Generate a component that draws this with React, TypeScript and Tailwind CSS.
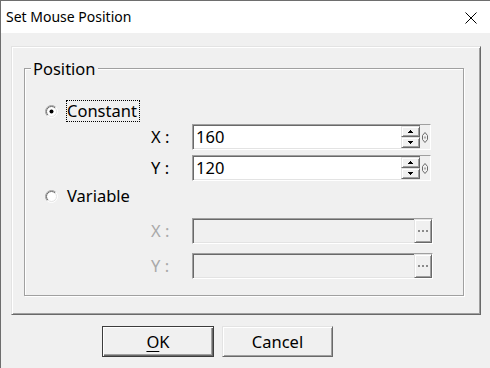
import React from "react";

const sunken =
  "border border-t-[#a0a0a0] border-l-[#a0a0a0] border-r-white border-b-white shadow-[inset_1px_1px_0_#696969,inset_-1px_-1px_0_#e3e3e3]";
const raised =
  "border border-t-[#e3e3e3] border-l-[#e3e3e3] border-r-[#696969] border-b-[#696969] shadow-[inset_1px_1px_0_#fff,inset_-1px_-1px_0_#a0a0a0]";

function Radio({ checked }: { checked: boolean }) {
  return (
    <svg width="13" height="13" viewBox="0 0 13 13" className="shrink-0">
      <circle cx="6.5" cy="6.5" r="5.5" fill="#fff" />
      <path d="M2.257 10.743 A6 6 0 0 1 10.743 2.257" stroke="#a0a0a0" fill="none" />
      <path d="M10.743 2.257 A6 6 0 0 1 2.257 10.743" stroke="#fff" fill="none" />
      <path d="M2.964 10.036 A5 5 0 0 1 10.036 2.964" stroke="#696969" fill="none" />
      <path d="M10.036 2.964 A5 5 0 0 1 2.964 10.036" stroke="#e3e3e3" fill="none" />
      {checked && <circle cx="6.5" cy="6.5" r="2" fill="#000" />}
    </svg>
  );
}

function SpinEdit({ value }: { value: string }) {
  return (
    <div className={`w-[239px] h-[26px] bg-white flex ${sunken}`}>
      <div className="flex-1 flex items-center pl-[3px] leading-[20px]">{value}</div>
      <div className="w-[19px] flex flex-col py-[1px]">
        <div className={`h-[11px] flex items-center justify-center bg-[#f0f0f0] ${raised}`}>
          <svg width="5" height="3" viewBox="0 0 5 3">
            <path d="M2 0h1v1h1v1h1v1H0V2h1V1h1z" fill="#000" />
          </svg>
        </div>
        <div className={`h-[11px] flex items-center justify-center bg-[#f0f0f0] ${raised}`}>
          <svg width="5" height="3" viewBox="0 0 5 3">
            <path d="M0 0h5v1H4v1H3v1H2V2H1V1H0z" fill="#000" />
          </svg>
        </div>
      </div>
      <div className="w-[10px] flex items-center justify-center bg-[#f0f0f0]">
        <svg width="6" height="11" viewBox="0 0 6 11">
          <path d="M3 0.5 L5.5 3.5 L5.5 7.5 L3 10.5 L0.5 7.5 L0.5 3.5 Z" stroke="#6a6a6a" fill="none" strokeWidth="1" />
          <rect x="2.5" y="4.5" width="1" height="2" fill="#6a6a6a" />
        </svg>
      </div>
    </div>
  );
}

function DisabledEdit() {
  return (
    <div className={`w-[241px] h-[26px] bg-[#f0f0f0] flex justify-end ${sunken}`}>
      <div className={`w-[18px] h-full flex items-center justify-center gap-[2px] ${raised}`}>
        <span className="w-[2px] h-[2px] bg-[#8a8a8a]" />
        <span className="w-[2px] h-[2px] bg-[#8a8a8a]" />
        <span className="w-[2px] h-[2px] bg-[#8a8a8a]" />
      </div>
    </div>
  );
}

export default function App() {
  return (
    <div className="w-[490px] h-[368px] overflow-hidden bg-[#f0f0f0] border-t border-l border-[#6e6e6e] flex flex-col font-['Noto_Sans','Open_Sans',sans-serif] text-[16.5px] text-black">
      <div className="h-[32px] shrink-0 bg-white flex items-center justify-between pl-[5px] pr-[13px]">
        <span className="text-[14px] leading-[20px]">Set Mouse Position</span>
        <svg width="12" height="12" viewBox="0 0 12 12" className="mt-[2px]">
          <path d="M0.5 0.5 L11.5 11.5 M11.5 0.5 L0.5 11.5" stroke="#000" strokeWidth="1" />
        </svg>
      </div>

      <div className="ml-[10px] mt-[13px] w-[470px] h-[269px] shrink-0 border border-t-[#e3e3e3] border-l-[#e3e3e3] border-r-[#696969] border-b-[#696969] shadow-[inset_1px_1px_0_#fff,inset_-1px_-1px_0_#a0a0a0] pl-[12px] pt-[21px]">
        <div className="relative w-[440px] h-[228px] border border-[#a0a0a0] shadow-[1px_1px_0_#fff,inset_1px_1px_0_#fff] pt-[31px] pl-[20px]">
          <span className="absolute left-[6px] top-[-11px] px-[2px] bg-[#f0f0f0] leading-[22px]">Position</span>

          <div className="flex items-center h-[22px] gap-[8px]">
            <Radio checked />
            <span className="h-[22px] border border-dotted border-black pr-[2px] leading-[20px]">Constant</span>
          </div>

          <div className="flex items-center mt-[2px]">
            <span className="ml-[106px] w-[41px] leading-[20px]">X :</span>
            <SpinEdit value="160" />
          </div>
          <div className="flex items-center mt-[5px]">
            <span className="ml-[106px] w-[41px] leading-[20px]">Y :</span>
            <SpinEdit value="120" />
          </div>

          <div className="flex items-center h-[22px] gap-[8px] mt-[4px]">
            <Radio checked={false} />
            <span className="pl-[1px] leading-[20px]">Variable</span>
          </div>

          <div className="flex items-center mt-[11px]">
            <span className="ml-[106px] w-[41px] leading-[20px] text-[#a9a9a9]">X :</span>
            <DisabledEdit />
          </div>
          <div className="flex items-center mt-[9px]">
            <span className="ml-[106px] w-[41px] leading-[20px] text-[#a9a9a9]">Y :</span>
            <DisabledEdit />
          </div>
        </div>
      </div>

      <div className="flex gap-[8px] ml-[101px] mt-[11px]">
        <button className="w-[112px] h-[31px] bg-[#f0f0f0] border border-[#3c3c3c] shadow-[inset_1px_1px_0_#fff,inset_-1px_-1px_0_#696969,inset_-2px_-2px_0_#a0a0a0] flex items-center justify-center leading-[20px]">
          <span>
            <span className="underline underline-offset-[3px]">O</span>K
          </span>
        </button>
        <button className={`w-[111px] h-[31px] bg-[#f0f0f0] flex items-center justify-center leading-[20px] ${raised}`}>
          Cancel
        </button>
      </div>
    </div>
  );
}
